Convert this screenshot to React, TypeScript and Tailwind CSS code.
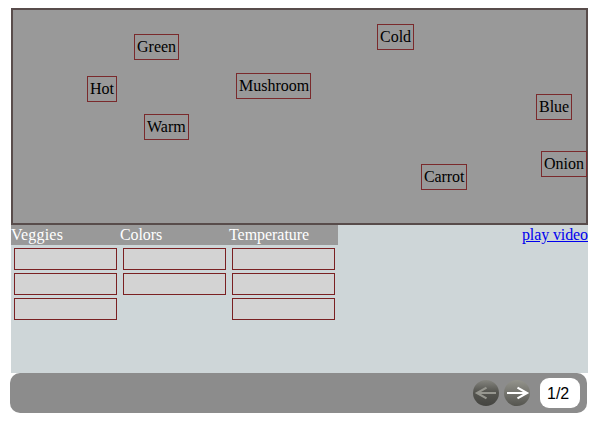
import React from 'react';

type Word = { text: string; place: string };

const words: Word[] = [
  { text: 'Green', place: 'left-[121px] top-[24px] w-[45px]' },
  { text: 'Hot', place: 'left-[74px] top-[66px] w-[30px]' },
  { text: 'Warm', place: 'left-[131px] top-[104px] w-[45px]' },
  { text: 'Mushroom', place: 'left-[223px] top-[63px] w-[75px]' },
  { text: 'Cold', place: 'left-[364px] top-[14px] w-[37px]' },
  { text: 'Carrot', place: 'left-[408px] top-[154px] w-[46px] tracking-[-0.1px]' },
  { text: 'Blue', place: 'left-[523px] top-[84px] w-[36px]' },
  { text: 'Onion', place: 'left-[528px] top-[141px] w-[46px]' },
];

const categories = [
  { title: 'Veggies', slots: 3, spacing: 'tracking-[0.2px]' },
  { title: 'Colors', slots: 2, spacing: 'tracking-[-0.1px]' },
  { title: 'Temperature', slots: 3, spacing: 'tracking-[-0.05px]' },
];

function WordTile({ text, place }: Word) {
  return (
    <div
      className={`absolute h-[26px] border border-[#7a2a2c] px-[2px] py-[2px] leading-5 whitespace-nowrap text-black ${place}`}
    >
      {text}
    </div>
  );
}

function Category({ title, slots, spacing }: { title: string; slots: number; spacing: string }) {
  return (
    <div className="w-[109px]">
      <div className={`h-5 bg-[#999999] leading-5 text-white ${spacing}`}>{title}</div>
      <div className="flex flex-col gap-[3px] px-[3px] pt-[3px]">
        {Array.from({ length: slots }, (_, i) => (
          <div key={i} className="h-[22px] border border-[#7a2022] bg-[#d3d3d3]" />
        ))}
      </div>
    </div>
  );
}

function ArrowButton({ direction }: { direction: 'back' | 'next' }) {
  const back = direction === 'back';
  return (
    <button
      aria-label={back ? 'Previous' : 'Next'}
      className={`size-[26px] rounded-full bg-linear-to-b ${
        back ? 'from-[#85857f] via-[#555550] via-45% to-[#454541]' : 'from-[#94948c] via-[#74746e] via-50% to-[#55554f]'
      }`}
    >
      <svg viewBox="0 0 26 26" className="size-[26px]" fill="none" strokeWidth="2.2">
        {back ? (
          <path d="M23 13H4.5M13.5 7.6L4 13L13.5 18.4" stroke="#96968f" />
        ) : (
          <path d="M3 13H22.5M13.5 7.6L23 13L13.5 18.4" stroke="#ffffff" />
        )}
      </svg>
    </button>
  );
}

export default function App() {
  return (
    <div className="h-[446px] w-[597px] overflow-hidden bg-white pt-2 font-['Liberation_Serif',serif] text-[16px]">
      <main className="ml-[11px] h-[365px] w-[577px] bg-[#ced6d8]">
        <section className="relative h-[217px] border-2 border-[#584c4b] bg-[#999999]">
          {words.map((word) => (
            <WordTile key={word.text} {...word} />
          ))}
        </section>
        <div className="flex items-start justify-between">
          <div className="flex">
            {categories.map((category) => (
              <Category key={category.title} {...category} />
            ))}
          </div>
          <a href="#" className="leading-5 tracking-[-0.1px] text-[#0000ee] underline">
            play video
          </a>
        </div>
      </main>
      <footer className="ml-[10px] flex h-10 w-[577px] items-center justify-end rounded-[10px] bg-[#8c8c8c] pr-[7px]">
        <div className="flex gap-[5px]">
          <ArrowButton direction="back" />
          <ArrowButton direction="next" />
        </div>
        <div className="ml-[10px] flex h-[30px] w-10 items-center rounded-[9px] bg-white pt-[2px] pl-[7px] font-['Liberation_Sans',sans-serif] text-[16px] text-black">
          1/2
        </div>
      </footer>
    </div>
  );
}
